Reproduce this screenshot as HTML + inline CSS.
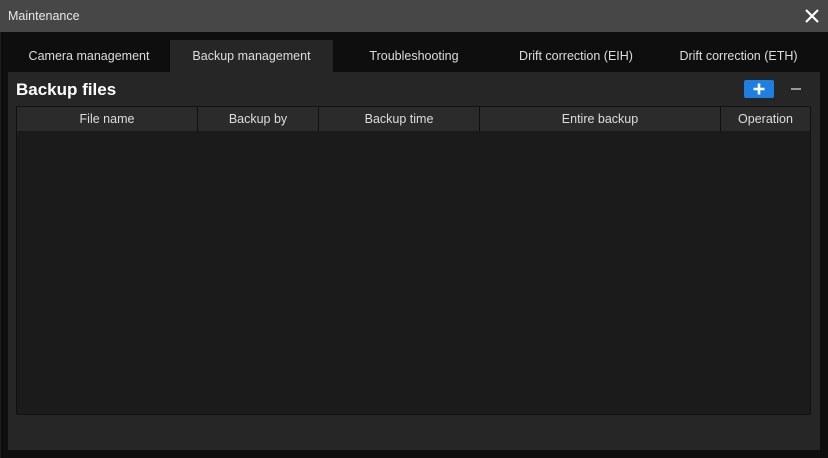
<html><head><style>
body{margin:0;width:828px;height:458px;background:#101010;font-family:"Liberation Sans",sans-serif;position:relative;overflow:hidden}
.ab{position:absolute}
.tb{left:0;top:0;width:828px;height:32px;background:#474747;color:#e8e8e8;font-size:12.5px}
.tab{top:40px;height:32px;line-height:33px;text-align:center;color:#ddd;font-size:12.5px}
</style></head><body>
<div class="ab tb"><span class="ab" style="left:8px;top:9px">Maintenance</span>
<svg class="ab" style="left:805px;top:9px" width="14" height="14"><path d="M1 1L13 13M13 1L1 13" stroke="#fff" stroke-width="2.2"/></svg></div>
<div class="ab" style="left:0;top:32px;width:828px;height:426px;background:#0e0e0e;border-left:1px solid #1e1e1e;box-sizing:border-box"></div>
<div class="ab tab" style="left:8px;width:162px">Camera management</div>
<div class="ab tab" style="left:170px;width:163px;background:#262626">Backup management</div>
<div class="ab tab" style="left:333px;width:162px">Troubleshooting</div>
<div class="ab tab" style="left:495px;width:162px">Drift correction (EIH)</div>
<div class="ab tab" style="left:657px;width:163px">Drift correction (ETH)</div>
<div class="ab" style="left:8px;top:72px;width:812px;height:378px;background:#262626"></div>
<div class="ab" style="left:16px;top:80px;color:#fff;font-weight:bold;font-size:17px">Backup files</div>
<div class="ab" style="left:744px;top:80px;width:30px;height:18px;background:#1e7fe0;border-radius:2px"><svg width="30" height="18"><path d="M15 3.5V14.5M9.5 9H20.5" stroke="#fff" stroke-width="2.6"/></svg></div>
<div class="ab" style="left:791px;top:88px;width:10px;height:2px;background:#999"></div>
<div class="ab" style="left:16px;top:106px;width:795px;height:309px;background:#1b1b1b;border:1px solid #111;box-sizing:border-box;border-radius:2px"></div>
<div class="ab" style="left:17px;top:107px;width:793px;height:24px;background:#2b2b2b;color:#ddd;font-size:12.5px">
<div class="ab" style="left:0;width:180px;top:5px;text-align:center">File name</div>
<div class="ab" style="left:180px;top:0;width:1px;height:24px;background:#111"></div>
<div class="ab" style="left:181px;width:120px;top:5px;text-align:center">Backup by</div>
<div class="ab" style="left:301px;top:0;width:1px;height:24px;background:#111"></div>
<div class="ab" style="left:302px;width:160px;top:5px;text-align:center">Backup time</div>
<div class="ab" style="left:462px;top:0;width:1px;height:24px;background:#111"></div>
<div class="ab" style="left:463px;width:240px;top:5px;text-align:center">Entire backup</div>
<div class="ab" style="left:703px;top:0;width:1px;height:24px;background:#111"></div>
<div class="ab" style="left:704px;width:89px;top:5px;text-align:center">Operation</div>
</div>
</body></html>
